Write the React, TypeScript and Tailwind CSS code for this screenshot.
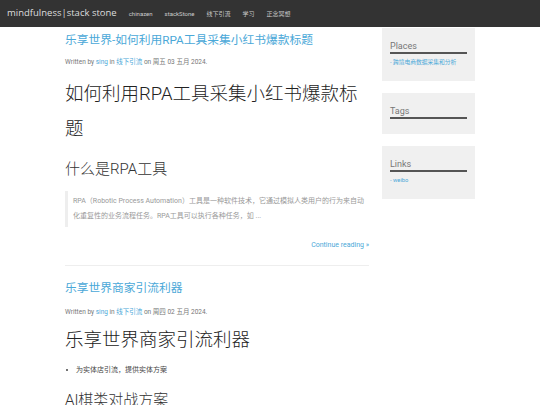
import React from "react";

const navLinks = ["chinazen", "stackStone", "线下引流", "学习", "正念冥想"];

function Meta({ day, date }: { day: string; date: string }) {
  return (
    <p className="text-[6.5px] leading-[10px] text-[#777]">
      Written by <a className="text-[#4aa8d8]">sing</a> in <a className="text-[#4aa8d8]">线下引流</a> on {day} {date} 五月 2024.
    </p>
  );
}

function Widget({ title, links }: { title: string; links: string[] }) {
  return (
    <div className="bg-[#f0f0f0] px-[8px] pt-[14px] pb-[15px] mb-[12px]">
      <h3 className="text-[9px] leading-[9px] pb-[1px] text-[#777] border-b-2 border-[#555]">{title}</h3>
      {links.length > 0 && (
        <ul className="mt-[4px] text-[5.75px] leading-[8px] text-[#4aa8d8]">
          {links.map((l) => (
            <li key={l}>- {l}</li>
          ))}
        </ul>
      )}
    </div>
  );
}

export default function App() {
  return (
    <div className="w-[540px] h-[405px] overflow-hidden bg-white font-['Roboto','Noto_Sans_CJK_SC',sans-serif]">
      {/* Navbar */}
      <nav className="h-[27px] bg-[#333] flex items-center px-[7px]">
        <a className="text-[9.5px] text-[#ddd] font-['Open_Sans','Noto_Sans_CJK_SC',sans-serif] mr-[12px]">
          mindfulness|stack stone
        </a>
        <ul className="flex gap-[12px] text-[6px] text-[#ccc]">
          {navLinks.map((l) => (
            <li key={l}>{l}</li>
          ))}
        </ul>
      </nav>

      <div className="w-[410px] mx-auto flex gap-[13px]">
        {/* Main column */}
        <main className="w-[304px] pt-[5px]">
          <article>
            <h2 className="text-[11.75px] leading-[16px] text-[#4aa8d8]">乐享世界-如何利用RPA工具采集小红书爆款标题</h2>
            <div className="mt-[9px]">
              <Meta day="周五" date="03" />
            </div>
            <h1 className="mt-[10px] text-[18.5px] leading-[35px] font-light text-[#222]">如何利用RPA工具采集小红书爆款标题</h1>
            <h2 className="mt-[10px] text-[15px] leading-[24px] font-light text-[#333]">什么是RPA工具</h2>
            <blockquote className="mt-[10px] border-l-[3px] border-[#eee] pl-[5px] py-[3px] text-[7px] leading-[15px] text-[#999] pr-[4px]">
              RPA（Robotic Process Automation）工具是一种软件技术，它通过模拟人类用户的行为来自动化重复性的业务流程任务。RPA工具可以执行各种任务，如 ...
            </blockquote>
            <p className="mt-[13px] text-right text-[7px] leading-[10px] text-[#4aa8d8]">Continue reading »</p>
          </article>

          <hr className="mt-[15px] border-t border-[#eee]" />

          <article className="mt-[14px]">
            <h2 className="text-[11.75px] leading-[16px] text-[#4aa8d8]">乐享世界商家引流利器</h2>
            <div className="mt-[11px]">
              <Meta day="周四" date="02" />
            </div>
            <h1 className="mt-[6px] text-[18.5px] leading-[35px] font-light text-[#222]">乐享世界商家引流利器</h1>
            <ul className="mt-[7px] text-[7px] leading-[10px] text-[#444] list-disc list-inside pl-[1px]">
              <li>为实体店引流，提供实体方案</li>
            </ul>
            <h2 className="mt-[13px] text-[15px] leading-[24px] font-light text-[#333]">AI棋类对战方案</h2>
          </article>
        </main>

        {/* Sidebar */}
        <aside className="w-[93px] pt-[1px]">
          <Widget title="Places" links={["跨境电商数据采集和分析"]} />
          <Widget title="Tags" links={[]} />
          <Widget title="Links" links={["weibo"]} />
        </aside>
      </div>
    </div>
  );
}
